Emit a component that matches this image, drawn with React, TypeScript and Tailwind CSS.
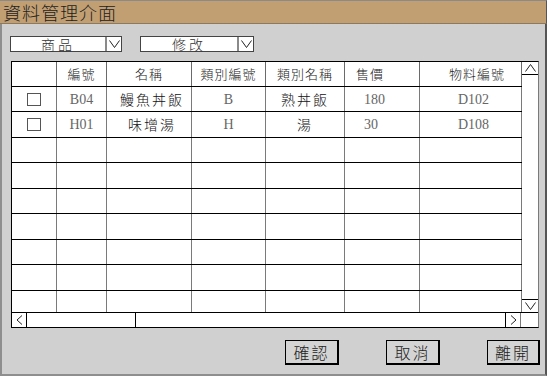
const cjk = { fontFamily: '"Noto Sans CJK TC", "Noto Sans CJK SC", sans-serif' };
const serif = { fontFamily: '"Liberation Serif", "Noto Sans CJK TC", serif' };

const cols = [
  { w: "w-[45px]", head: "", cls: "justify-center" },
  { w: "w-[50px]", head: "編號", cls: "justify-center" },
  { w: "w-[85px]", head: "名稱", cls: "justify-center" },
  { w: "w-[74px]", head: "類別編號", cls: "justify-center" },
  { w: "w-[79px]", head: "類別名稱", cls: "justify-center" },
  { w: "w-[75px]", head: "售價", cls: "justify-start pl-[11px]" },
  { w: "w-[102px]", head: "物料編號", cls: "justify-start pl-[29px]" },
];

const rows = [
  ["B04", "鰻魚丼飯", "B", "熟丼飯", "180", "D102"],
  ["H01", "味增湯", "H", "湯", "30", "D108"],
];

const rowHeights = [
  "h-[25px]",
  "h-[26px]",
  "h-[25px]",
  "h-[26px]",
  "h-[25px]",
  "h-[26px]",
  "h-[25px]",
  "h-[26px]",
];

function Chevron() {
  return (
    <svg width="11" height="8" viewBox="0 0 11 8">
      <polyline points="0.5,0.5 5.5,7.5 10.5,0.5" fill="none" stroke="#222" strokeWidth="1" />
    </svg>
  );
}

function Select({ label, w }: { label: string; w: string }) {
  return (
    <div className={`flex h-[16px] bg-white border border-[#444] ${w}`}>
      <div className="flex-1 flex items-center justify-center text-[14px] font-light tracking-[3px] text-[#333] leading-none" style={cjk}>
        {label}
      </div>
      <div className="w-[16px] border-l-2 border-[#8a8a8a] flex items-center justify-center">
        <Chevron />
      </div>
    </div>
  );
}

function Btn({ label, w }: { label: string; w: string }) {
  return (
    <button
      className={`h-[25px] ${w} bg-[#d4d4d4] border border-black border-r-2 border-b-2 text-[16px] font-light tracking-[2px] text-[#222] flex items-center justify-center leading-none`}
      style={cjk}
    >
      {label}
    </button>
  );
}

export default function App() {
  return (
    <div className="w-[547px] h-[376px] flex flex-col bg-[#d0d0d0] overflow-hidden">
      <div className="h-[24px] shrink-0 bg-[#c19f72] border-t border-[#8a8a8a] border-b border-b-[#8c7a5e] border-r border-r-[#555] flex items-center pl-[3px]">
        <span className="text-[18px] font-light tracking-[1px] text-[#222] leading-none" style={cjk}>
          資料管理介面
        </span>
      </div>

      <div className="flex-1 flex flex-col border-l-2 border-l-[#8e8e8e] border-r-2 border-r-[#555] border-b-2 border-b-[#8e8e8e]">
        <div className="flex gap-[18px] pl-[8px] pt-[12px]">
          <Select label="商品" w="w-[112px]" />
          <Select label="修改" w="w-[114px]" />
        </div>

        <div className="ml-[9px] mt-[9px] w-[528px] border border-black border-r-[#7a7a7a] bg-white flex flex-col">
          <div className="flex">
            <div className="flex flex-col">
              <div className="flex h-[25px] border-b border-black">
                {cols.map((c, i) => (
                  <div
                    key={i}
                    className={`${c.w} border-r border-[#6a6a6a] flex items-center ${c.cls} text-[13px] font-light tracking-[1px] text-[#222]`}
                    style={cjk}
                  >
                    {c.head}
                  </div>
                ))}
              </div>
              {rowHeights.map((h, r) => (
                <div key={r} className={`flex ${h} border-b border-black`}>
                  {cols.map((c, i) => {
                    const data = rows[r];
                    let content: React.ReactNode = null;
                    if (data) {
                      if (i === 0) {
                        content = <div className="w-[14px] h-[13px] border-[1.5px] border-[#555] bg-white" />;
                      } else {
                        const v = data[i - 1];
                        const latin = i === 1 || i === 3 || i === 5 || i === 6;
                        content = (
                          <span
                            className={latin ? "text-[14px] text-[#666]" : "text-[14px] font-light tracking-[2px] text-[#111]"}
                            style={latin ? serif : cjk}
                          >
                            {v}
                          </span>
                        );
                      }
                    }
                    const align =
                      i === 5 ? "justify-start pl-[19px]" : i === 6 ? "justify-start pl-[38px]" : i === 2 ? "justify-center pl-[6px]" : "justify-center";
                    return (
                      <div key={i} className={`${c.w} border-r border-[#7a7a7a] flex items-center ${align}`}>
                        {content}
                      </div>
                    );
                  })}
                </div>
              ))}
              <div className="flex h-[21px]">
                {cols.map((c, i) => (
                  <div key={i} className={`${c.w} border-r border-[#7a7a7a]`} />
                ))}
              </div>
            </div>

            <div className="w-[16px] flex flex-col justify-between bg-white">
              <div className="h-[13px] border-b border-black flex items-center justify-center">
                <svg width="11" height="8" viewBox="0 0 11 8">
                  <polyline points="0.5,7.5 5.5,0.5 10.5,7.5" fill="none" stroke="#222" strokeWidth="1" />
                </svg>
              </div>
              <div className="h-[13px] border-t border-black flex items-center justify-center">
                <Chevron />
              </div>
            </div>
          </div>

          <div className="flex h-[15px] border-t border-black">
            <div className="w-[15px] border-r border-black flex items-center justify-center">
              <svg width="7" height="10" viewBox="0 0 7 10">
                <polyline points="6,0.5 1,5 6,9.5" fill="none" stroke="#222" strokeWidth="1" />
              </svg>
            </div>
            <div className="w-[109px] border-r border-black" />
            <div className="w-[370px] border-r border-black" />
            <div className="w-[15px] border-r border-[#7a7a7a] flex items-center justify-center">
              <svg width="7" height="10" viewBox="0 0 7 10">
                <polyline points="1,0.5 6,5 1,9.5" fill="none" stroke="#222" strokeWidth="1" />
              </svg>
            </div>
            <div className="w-[16px]" />
          </div>
        </div>

        <div className="flex pl-[283px] pt-[12px]">
          <Btn label="確認" w="w-[54px]" />
          <div className="w-[47px]" />
          <Btn label="取消" w="w-[54px]" />
          <div className="w-[47px]" />
          <Btn label="離開" w="w-[53px]" />
        </div>
      </div>
    </div>
  );
}
